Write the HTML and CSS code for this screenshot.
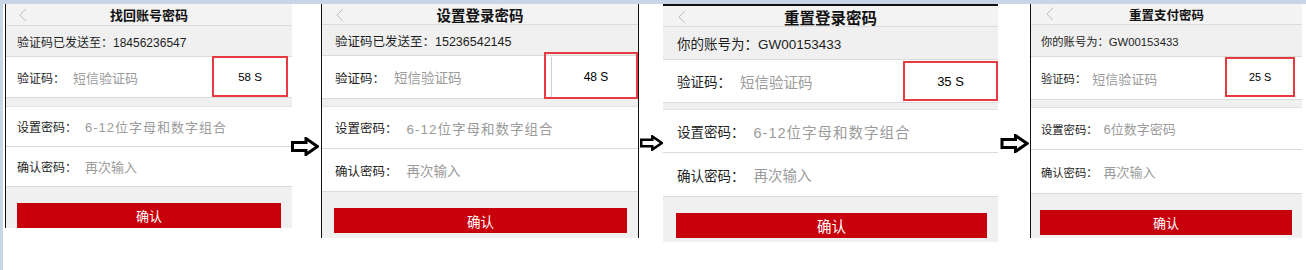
FILE: index.html
```html
<!DOCTYPE html>
<html lang="zh-CN">
<head>
<meta charset="utf-8">
<title>找回/重置密码流程</title>
<link rel="stylesheet" href="styles.css">
</head>
<body>
<div class="page">
  <div class="strip">
    <section class="phone p1">
      <header class="title">
        <svg class="back" viewBox="0 0 10 16"><polyline points="9,1 2,8 9,15"/></svg>
        <span class="title-text">找回账号密码</span>
      </header>
      <div class="info">验证码已发送至：18456236547</div>
      <div class="row code"><span class="label">验证码：</span><span class="ph">短信验证码</span><span class="timer"><span class="t-in">58 S</span></span></div>
      <div class="gap"></div>
      <div class="row r1"><span class="label">设置密码：</span><span class="ph sp">6-12位字母和数字组合</span></div>
      <div class="row r2"><span class="label">确认密码：</span><span class="ph">再次输入</span></div>
      <div class="foot"><div class="btn">确认</div></div>
    </section>

    <div class="arrow a1"><svg viewBox="0 0 28 19"><polygon points="1.5,5.5 15,5.5 15,1.5 26.5,9.5 15,17.5 15,13.5 1.5,13.5"/></svg></div>

    <section class="phone p2">
      <header class="title">
        <svg class="back" viewBox="0 0 10 16"><polyline points="9,1 2,8 9,15"/></svg>
        <span class="title-text">设置登录密码</span>
      </header>
      <div class="info">验证码已发送至：15236542145</div>
      <div class="row code"><span class="label">验证码：</span><span class="ph">短信验证码</span><span class="timer"><span class="t-in divided">48 S</span></span></div>
      <div class="gap"></div>
      <div class="row r1"><span class="label">设置密码：</span><span class="ph sp">6-12位字母和数字组合</span></div>
      <div class="row r2"><span class="label">确认密码：</span><span class="ph">再次输入</span></div>
      <div class="foot"><div class="btn">确认</div></div>
    </section>

    <div class="arrow a2"><svg viewBox="0 0 28 19"><polygon points="1.5,5.5 15,5.5 15,1.5 26.5,9.5 15,17.5 15,13.5 1.5,13.5"/></svg></div>

    <section class="phone p3">
      <header class="title">
        <svg class="back" viewBox="0 0 10 16"><polyline points="9,1 2,8 9,15"/></svg>
        <span class="title-text">重置登录密码</span>
      </header>
      <div class="info">你的账号为：GW00153433</div>
      <div class="row code"><span class="label">验证码：</span><span class="ph">短信验证码</span><span class="timer"><span class="t-in">35 S</span></span></div>
      <div class="gap"></div>
      <div class="row r1"><span class="label">设置密码：</span><span class="ph sp">6-12位字母和数字组合</span></div>
      <div class="row r2"><span class="label">确认密码：</span><span class="ph">再次输入</span></div>
      <div class="foot"><div class="btn">确认</div></div>
    </section>

    <div class="arrow a3"><svg viewBox="0 0 28 19"><polygon points="1.5,5.5 15,5.5 15,1.5 26.5,9.5 15,17.5 15,13.5 1.5,13.5"/></svg></div>

    <section class="phone p4">
      <header class="title">
        <svg class="back" viewBox="0 0 10 16"><polyline points="9,1 2,8 9,15"/></svg>
        <span class="title-text">重置支付密码</span>
      </header>
      <div class="info">你的账号为：GW00153433</div>
      <div class="row code"><span class="label">验证码：</span><span class="ph">短信验证码</span><span class="timer"><span class="t-in">25 S</span></span></div>
      <div class="gap"></div>
      <div class="row r1"><span class="label">设置密码：</span><span class="ph">6位数字密码</span></div>
      <div class="row r2"><span class="label">确认密码：</span><span class="ph">再次输入</span></div>
      <div class="foot"><div class="btn">确认</div></div>
    </section>
  </div>
</div>
</body>
</html>
```

FILE: styles.css
```css
* { box-sizing: border-box; }

html, body {
  margin: 0;
  padding: 0;
  background: #ffffff;
}

body {
  font-family: "Liberation Sans", "Noto Sans CJK SC", sans-serif;
  color: #222;
}

.page {
  width: 1306px;
  height: 270px;
  border-top: 4px solid #c8d5e6;
  border-left: 3px solid #c8d5e6;
  overflow: hidden;
}

.strip {
  display: flex;
  align-items: flex-start;
  padding-left: 2px;
}

/* ---------- phone panels ---------- */
.phone {
  display: flex;
  flex-direction: column;
  flex: none;
  width: var(--w);
  font-size: var(--fs);
  background: #fff;
}

.p1 {
  --w: 287px; --pad: 11px; --fs: 12px; --pfs: 13px; --tfs: 13px;
  --h-title: 22px; --h-info: 31px; --h-code: 41px; --h-gap: 9px;
  --h-r1: 40px; --h-r2: 40px; --h-foot: 41px;
  --bl: 12px; --pg: 8px; --tw: 76px; --tr: 4px; --tt: -1px; --tb: 0px;
  --bpl: 11px; --bpr: 11px; --ffs: 13px;
  border-left: 1px solid #111;
}

.p2 {
  --w: 318px; --pad: 13px; --fs: 12.5px; --pfs: 13.5px; --tfs: 14.5px;
  --h-title: 21px; --h-info: 31px; --h-code: 43px; --h-gap: 8px;
  --h-r1: 42px; --h-r2: 43px; --h-foot: 46px;
  --bl: 13px; --pg: 9px; --tw: 94px; --tr: 0px; --tt: -4px; --tb: -1px;
  --bpl: 12px; --bpr: 11px; --ffs: 13.5px;
  border-left: 1px solid #111;
  border-right: 1px solid #111;
}

.p3 {
  --w: 335px; --pad: 14px; --fs: 13.5px; --pfs: 14.5px; --tfs: 15.5px;
  --h-title: 21px; --h-info: 33px; --h-code: 43px; --h-gap: 7px;
  --h-r1: 43px; --h-r2: 44px; --h-foot: 45px;
  --bl: 14px; --pg: 9px; --tw: 95px; --tr: 0px; --tt: 1px; --tb: 1px;
  --bpl: 13px; --bpr: 11px; --ffs: 14.5px;
  border-top: 2px solid #111;
}

.p4 {
  --w: 272px; --pad: 10px; --fs: 11.3px; --pfs: 13px; --tfs: 12.5px;
  --h-title: 21px; --h-info: 32px; --h-code: 43px; --h-gap: 8px;
  --h-r1: 42px; --h-r2: 44px; --h-foot: 44px;
  --bl: 14px; --pg: 6px; --tw: 70px; --tr: 7px; --tt: 0px; --tb: 2px;
  --bpl: 9px; --bpr: 10px; --ffs: 13px;
  border-left: 1px solid #111;
}

/* title bar */
.title {
  height: var(--h-title);
  display: grid;
  grid-template-columns: 1fr auto 1fr;
  align-items: center;
  background: #f3f3f3;
  border-bottom: 1px solid #dcdcdc;
}

.back {
  width: 9px;
  height: 14px;
  margin-left: var(--bl);
  fill: none;
  stroke: #b9b9b9;
  stroke-width: 1.1;
}

.title-text {
  font-size: var(--tfs);
  font-weight: bold;
  color: #111;
  white-space: nowrap;
}

/* info row */
.info {
  height: var(--h-info);
  display: flex;
  align-items: center;
  padding-left: var(--pad);
  background: #f0f0f0;
  border-bottom: 1px solid #dadada;
  color: #1e1e1e;
  white-space: nowrap;
}

/* form rows */
.row {
  display: flex;
  align-items: center;
  padding-left: var(--pad);
  background: #fff;
  border-bottom: 1px solid #dadada;
  white-space: nowrap;
}

.code { height: var(--h-code); }
.r1 { height: var(--h-r1); }
.r2 { height: var(--h-r2); }

.label { color: #1e1e1e; }

.ph {
  margin-left: var(--pg);
  font-size: var(--pfs);
  color: #9b9b9b;
  flex: 1;
}

.ph.sp { letter-spacing: 1px; }

.timer {
  flex: none;
  align-self: stretch;
  width: var(--tw);
  margin-right: var(--tr);
  margin-top: var(--tt);
  margin-bottom: var(--tb);
  border: 2px solid #e63b40;
  display: flex;
  font-size: calc(var(--fs) - 0.5px);
  color: #000;
}

.t-in {
  flex: 1;
  display: flex;
  align-items: center;
  justify-content: center;
}

.t-in.divided {
  margin-left: 5px;
  margin-top: 3px;
  border-left: 1px solid #cfcfcf;
  padding-left: 4px;
}

.gap {
  height: var(--h-gap);
  background: #f0f0f0;
  border-bottom: 1px solid #e2e2e2;
}

.foot {
  height: var(--h-foot);
  background: #f0f0f0;
  padding: 16px var(--bpr) 0 var(--bpl);
}

.btn {
  height: 25px;
  background: #c7000b;
  color: #fff;
  font-size: var(--ffs);
  display: flex;
  align-items: center;
  justify-content: center;
}

/* ---------- arrows ---------- */
.arrow {
  flex: none;
  display: flex;
  justify-content: center;
}

.arrow svg {
  fill: #fff;
  stroke: #000;
  stroke-width: 3;
  stroke-linejoin: miter;
}

.a1 { width: 29px; margin-top: 133px; }
.a1 svg { width: 28px; height: 19px; margin-left: -3px; }

.a2 { width: 24px; margin-top: 131px; }
.a2 svg { width: 23px; height: 16px; }

.a3 { width: 32px; margin-top: 130px; }
.a3 svg { width: 29px; height: 19px; }
```
